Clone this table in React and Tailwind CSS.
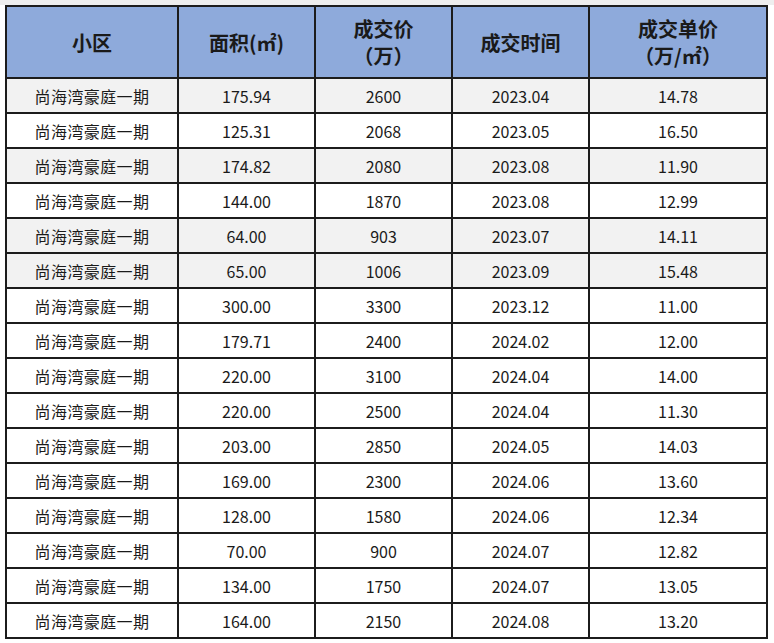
import React from "react";

const rows = [
  ["175.94", "2600", "2023.04", "14.78", true],
  ["125.31", "2068", "2023.05", "16.50", false],
  ["174.82", "2080", "2023.08", "11.90", true],
  ["144.00", "1870", "2023.08", "12.99", false],
  ["64.00", "903", "2023.07", "14.11", true],
  ["65.00", "1006", "2023.09", "15.48", true],
  ["300.00", "3300", "2023.12", "11.00", false],
  ["179.71", "2400", "2024.02", "12.00", false],
  ["220.00", "3100", "2024.04", "14.00", false],
  ["220.00", "2500", "2024.04", "11.30", false],
  ["203.00", "2850", "2024.05", "14.03", false],
  ["169.00", "2300", "2024.06", "13.60", false],
  ["128.00", "1580", "2024.06", "12.34", false],
  ["70.00", "900", "2024.07", "12.82", false],
  ["134.00", "1750", "2024.07", "13.05", false],
  ["164.00", "2150", "2024.08", "13.20", false],
];

const font = { fontFamily: '"Noto Sans CJK SC", "Noto Sans", sans-serif' };

const Head = ({ children }) => (
  <div className="flex flex-col items-center justify-center border-r-2 border-b-2 border-[#1c1c1c] bg-[#8eaadb] text-[20px] leading-[27px] font-bold text-[#1a1a1a]">
    {children}
  </div>
);

const Cell = ({ children, gray }) => (
  <div
    className={`flex items-center justify-center border-r-2 border-b-2 border-[#1c1c1c] text-[16px] text-[#1a1a1a] ${
      gray ? "bg-[#f2f2f2]" : "bg-white"
    }`}
  >
    {children}
  </div>
);

const App = () => {
  return (
    <div className="w-[774px] h-[643px] bg-white overflow-hidden" style={font}>
      <div className="h-[5px] bg-[#eeeeee]" />
      <div className="ml-[5px] w-[763px] border-l-2 border-t-2 border-[#1c1c1c] grid grid-cols-[172px_137px_137px_137px_178px] grid-rows-[72px_repeat(16,35px)]">
        <Head>小区</Head>
        <Head>面积(㎡)</Head>
        <Head>
          <span>成交价</span>
          <span>（万）</span>
        </Head>
        <Head>成交时间</Head>
        <Head>
          <span>成交单价</span>
          <span>（万/㎡）</span>
        </Head>
        {rows.map((r, i) => (
          <React.Fragment key={i}>
            <Cell gray={r[4]}>
              <span className="tracking-[0.4px]">尚海湾豪庭一期</span>
            </Cell>
            <Cell gray={r[4]}>{r[0]}</Cell>
            <Cell gray={r[4]}>{r[1]}</Cell>
            <Cell gray={r[4]}>{r[2]}</Cell>
            <Cell gray={r[4]}>{r[3]}</Cell>
          </React.Fragment>
        ))}
      </div>
    </div>
  );
};

export default App;
